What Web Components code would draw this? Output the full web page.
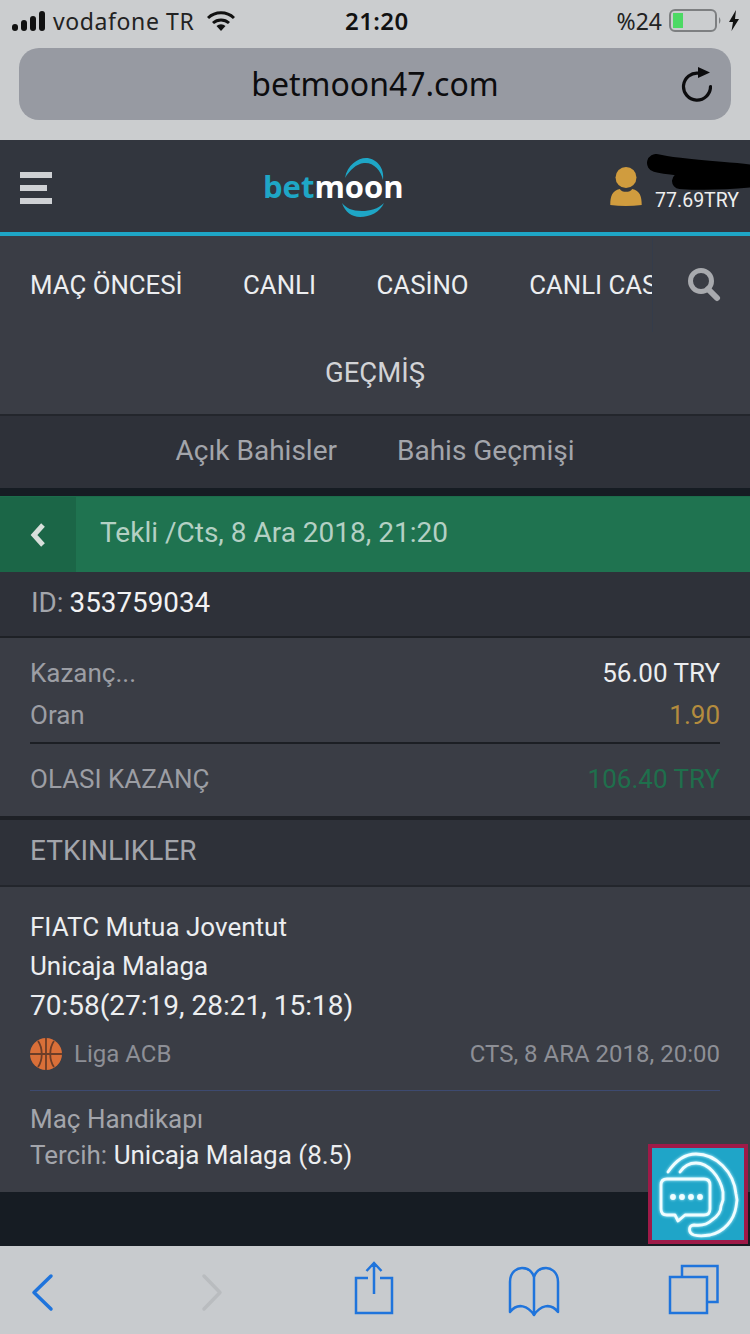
<!DOCTYPE html>
<html lang="tr">
<head>
<meta charset="utf-8">
<title>betmoon47.com</title>
<style>
  html, body { margin: 0; padding: 0; }
  body { width: 750px; height: 1334px; overflow: hidden; background: #161c23; font-family: Roboto, "Liberation Sans", sans-serif; display: flex; flex-direction: column; position: relative; }
</style>
</head>
<body>
  <ios-status></ios-status>
  <url-bar>betmoon47.com</url-bar>
  <site-header></site-header>
  <main-nav></main-nav>
  <page-title>GEÇMİŞ</page-title>
  <sub-tabs></sub-tabs>
  <back-bar>Tekli /Cts, 8 Ara 2018, 21:20</back-bar>
  <id-row></id-row>
  <stake-box></stake-box>
  <events-head>ETKINLIKLER</events-head>
  <event-card></event-card>
  <page-fill></page-fill>
  <safari-bar></safari-bar>
  <chat-button></chat-button>

<script>
// barra de status do iphone
class IosStatus extends HTMLElement {
  constructor() {
    super();
    const shadow = this.attachShadow({ mode: "open" });
    shadow.innerHTML = `
      <style>
        :host { display: flex; height: 48px; background: #cbcdcf; align-items: center; padding: 0 10px 7px 12px; box-sizing: border-box; color: #111; font-family: "Noto Sans", Roboto, sans-serif; font-size: 23px; position: relative; }
        .left { display: flex; align-items: center; flex: 1; }
        .carrier { margin-left: 8px; letter-spacing: .6px; color: #222; }
        .wifi { margin-left: 13px; }
        .time { position: absolute; left: 345px; top: 4px; font-weight: 600; font-size: 24px; letter-spacing: .4px; }
        .right { display: flex; align-items: center; }
        .pct { font-size: 23px; color: #222; margin-right: 7px; }
        .bat { margin-right: 5px; }
      </style>
      <div class="left">
        <svg width="33" height="20" viewBox="0 0 33 20"><rect x="0" y="13" width="6" height="7" rx="3" fill="#111"/><rect x="9" y="9" width="6" height="11" rx="3" fill="#111"/><rect x="18" y="5" width="6" height="15" rx="3" fill="#111"/><rect x="27" y="0" width="6" height="20" rx="3" fill="#111"/></svg>
        <span class="carrier">vodafone TR</span>
        <svg class="wifi" width="28" height="20" viewBox="0 0 28 20"><path d="M1 7 A19 19 0 0 1 27 7" fill="none" stroke="#111" stroke-width="3"/><path d="M6 12 A12 12 0 0 1 22 12" fill="none" stroke="#111" stroke-width="3"/><path d="M9.500 15 A6.500 6.500 0 0 1 18.500 15 L14 20 Z" fill="#111"/></svg>
      </div>
      <span class="time">21:20</span>
      <div class="right">
        <span class="pct">%24</span>
        <svg class="bat" width="54" height="24" viewBox="0 0 54 24"><rect x="1" y="1" width="46" height="21" rx="5" fill="none" stroke="#7d7f81" stroke-width="2"/><rect x="4" y="4" width="10" height="15" fill="#4cd964"/><path d="M50 8 q3 3.500 0 7 z" fill="#7d7f81"/></svg>
        <svg width="12" height="22" viewBox="0 0 12 22"><path d="M8 0 L1 12 H5 L3.500 21 L11 9 H7 Z" fill="#111"/></svg>
      </div>
    `;
  }
}
customElements.define("ios-status", IosStatus);

// barra de endereco do safari
class UrlBar extends HTMLElement {
  constructor() {
    super();
    const shadow = this.attachShadow({ mode: "open" });
    shadow.innerHTML = `
      <style>
        :host { display: block; height: 92px; background: #cbcdcf; padding: 0 19px; box-sizing: border-box; }
        .pill { height: 72px; box-sizing: border-box; padding-bottom: 2px; background: #979aa2; border-radius: 20px; display: flex; align-items: center; justify-content: center; position: relative; color: #0c0c0e; font-family: "Noto Sans", sans-serif; font-size: 32px; }
        svg { position: absolute; right: 19px; top: 18px; }
      </style>
      <div class="pill"><slot></slot>
        <svg width="31" height="36" viewBox="0 0 31 36"><path d="M18 7.200 A13.500 13.500 0 1 0 29.500 20.500" fill="none" stroke="#0c0c0e" stroke-width="3.200" stroke-linecap="round"/><path d="M17 1 L29 6.500 L17 12 Z" fill="#0c0c0e"/></svg>
      </div>
    `;
  }
}
customElements.define("url-bar", UrlBar);

// topo do site com logo e usuario
class SiteHeader extends HTMLElement {
  constructor() {
    super();
    const shadow = this.attachShadow({ mode: "open" });
    shadow.innerHTML = `
      <style>
        :host { display: flex; height: 96px; box-sizing: border-box; background: #32363e; border-bottom: 4px solid #1ea6c6; align-items: center; padding: 0 11px 0 20px; position: relative; color: #fff; }
        .burger { width: 32px; height: 32px; display: flex; flex-direction: column; justify-content: space-between; margin-top: 4px; }
        .burger i { display: block; height: 6px; background: #cfd1d4; }
        .burger i:nth-child(2) { width: 27px; }
        .logo { margin-left: 213px; display: flex; position: relative; margin-top: -2px; padding-top: 2px; box-sizing: border-box; width: 140px; height: 64px; align-items: center; font-family: "Open Sans", sans-serif; font-size: 31px; font-weight: 700; }
        .logo svg { position: absolute; left: 0; top: 0; overflow: visible; }
        .logo b { font-weight: 700; position: relative; color: #1ea6c6; margin-left: -2px; }
        .logo em { font-style: normal; color: #fff; position: relative; }
        .user { margin-left: auto; display: flex; align-items: flex-end; margin-top: 2px; }
        .user svg { display: block; }
        .money { font-size: 19.500px; margin-left: 13px; color: #eee; margin-bottom: -3px; line-height: 18px; position: relative; z-index: 1; }
        .scribble { position: absolute; left: 646px; top: 14px; }
      </style>
      <div class="burger"><i></i><i></i><i></i></div>
      <div class="logo">
        <svg width="140" height="66" viewBox="0 0 140 66"><path d="M80 25 C82 12 93 5 101 5 C111 5 120 15 118 27 C116 17 108 9 99 10 C91 11 85 17 80 25 Z M77 50 C80 59 87 64 95 64 C105 64 115 59 119 50 C113 56 105 58 97 58 C87 58 81 55 77 50 Z" fill="#1ea6c6"/></svg>
        <b>bet</b><em>moon</em>
      </div>
      <div class="user">
        <svg width="32" height="40" viewBox="0 0 33 42"><circle cx="16.500" cy="11" r="11" fill="#d09c3e"/><path d="M0 40 C0 30 2 25 10 23 C12 27 21 27 23 23 C31 25 33 30 33 40 Q16 42 0 40 Z" fill="#d09c3e"/></svg>
        <span class="money">77.69TRY</span>
      </div>
      <svg class="scribble" width="104" height="44" viewBox="0 0 104 44" fill="none" stroke="#000" stroke-linecap="round"><path d="M10 9 C30 14 70 16 110 20" stroke-width="18"/><path d="M34 27 C60 29 80 28 110 25" stroke-width="16"/></svg>
    `;
  }
}
customElements.define("site-header", SiteHeader);

// menu principal, o ultimo item fica cortado
class MainNav extends HTMLElement {
  constructor() {
    super();
    const shadow = this.attachShadow({ mode: "open" });
    shadow.innerHTML = `
      <style>
        :host { display: flex; height: 96px; background: #3a3d45; color: #eceef0; font-size: 25.800px; align-items: center; padding-top: 2px; box-sizing: border-box; }
        .items { width: 653px; box-sizing: border-box; border-right: 1px solid #343c4a; height: 100%; overflow: hidden; display: flex; align-items: center; gap: 60.500px; padding-left: 30px; white-space: nowrap; }
        .search { flex: 1; display: flex; justify-content: center; padding-left: 4px; }
      </style>
      <div class="items"><span>MAÇ ÖNCESİ</span><span>CANLI</span><span>CASİNO</span><span>CANLI CASİNO</span></div>
      <div class="search"><svg width="34" height="34" viewBox="0 0 34 34"><circle cx="14" cy="13" r="10.500" fill="none" stroke="#a8aaae" stroke-width="5"/><path d="M21 21 L30 30" stroke="#a8aaae" stroke-width="6" stroke-linecap="round"/></svg></div>
    `;
  }
}
customElements.define("main-nav", MainNav);

class PageTitle extends HTMLElement {
  constructor() {
    super();
    const shadow = this.attachShadow({ mode: "open" });
    shadow.innerHTML = `
      <style>
        :host { display: flex; height: 84px; background: #3a3d45; color: #d2d3d6; font-size: 27.500px; align-items: center; justify-content: center; border-bottom: 2px solid #23262c; box-sizing: border-box; padding-bottom: 2px; }
      </style>
      <slot></slot>
    `;
  }
}
customElements.define("page-title", PageTitle);

class SubTabs extends HTMLElement {
  constructor() {
    super();
    const shadow = this.attachShadow({ mode: "open" });
    shadow.innerHTML = `
      <style>
        :host { display: flex; height: 72px; box-sizing: border-box; padding-bottom: 4px; background: #2e3139; color: #a3a5ab; font-size: 28px; align-items: center; justify-content: center; gap: 60px; }
      </style>
      <span>Açık Bahisler</span><span>Bahis Geçmişi</span>
    `;
  }
}
customElements.define("sub-tabs", SubTabs);

// faixa verde com botao de voltar
class BackBar extends HTMLElement {
  constructor() {
    super();
    const shadow = this.attachShadow({ mode: "open" });
    shadow.innerHTML = `
      <style>
        :host { display: flex; height: 76px; margin-top: 8px; background: #1f7350; color: #b4d0c4; font-size: 28px; align-items: center; border-top: 1px solid #1c6c4b; box-sizing: border-box; }
        .back { width: 76px; height: 100%; background: #1b6647; display: flex; align-items: center; justify-content: center; margin-right: 24px; }
        span { padding-bottom: 4px; }
      </style>
      <div class="back"><svg width="18" height="26" viewBox="0 0 18 26"><path d="M14 3 L5 13 L14 23" fill="none" stroke="#d8dfdb" stroke-width="5"/></svg></div>
      <span><slot></slot></span>
    `;
  }
}
customElements.define("back-bar", BackBar);

class IdRow extends HTMLElement {
  constructor() {
    super();
    const shadow = this.attachShadow({ mode: "open" });
    shadow.innerHTML = `
      <style>
        :host { display: flex; height: 66px; background: #2e3139; border-bottom: 2px solid #1e2126; box-sizing: border-box; align-items: center; padding: 0 31px 4px; font-size: 27.800px; color: #a3a5ab; }
        span { color: #f2f2f3; margin-left: 6px; }
      </style>
      ID: <span>353759034</span>
    `;
  }
}
customElements.define("id-row", IdRow);

// caixa com valores da aposta
class StakeBox extends HTMLElement {
  constructor() {
    super();
    const shadow = this.attachShadow({ mode: "open" });
    shadow.innerHTML = `
      <style>
        :host { display: block; height: 182px; background: #3a3d45; padding: 14px 30px 0 30px; box-sizing: border-box; border-bottom: 4px solid #1e2126; font-size: 26px; color: #9c9ea4; }
        .row { display: flex; justify-content: space-between; align-items: center; height: 42px; }
        .white { color: #eceef0; }
        .gold { color: #b48c3e; }
        .green { color: #1f6f4c; }
        hr { border: 0; border-top: 2px solid #1c1f24; margin: 6px 0 0; }
        .total { height: 70px; }
      </style>
      <div class="row"><span>Kazanç...</span><span class="white">56.00 TRY</span></div>
      <div class="row"><span>Oran</span><span class="gold">1.90</span></div>
      <hr>
      <div class="row total"><span>OLASI KAZANÇ</span><span class="green">106.40 TRY</span></div>
    `;
  }
}
customElements.define("stake-box", StakeBox);

class EventsHead extends HTMLElement {
  constructor() {
    super();
    const shadow = this.attachShadow({ mode: "open" });
    shadow.innerHTML = `
      <style>
        :host { display: flex; height: 67px; background: #2e3139; border-bottom: 2px solid #23262c; box-sizing: border-box; align-items: center; padding: 0 30px 4px; font-size: 28px; color: #a3a5ab; }
      </style>
      <slot></slot>
    `;
  }
}
customElements.define("events-head", EventsHead);

// cartao do jogo
class EventCard extends HTMLElement {
  constructor() {
    super();
    const shadow = this.attachShadow({ mode: "open" });
    shadow.innerHTML = `
      <style>
        :host { display: block; height: 305px; background: #3a3d45; padding: 21px 30px 0; box-sizing: border-box; font-size: 26px; color: #eceef0; }
        .team { height: 39px; line-height: 39px; }
        .score { font-size: 28px; }
        .meta { display: flex; align-items: center; height: 57px; color: #8d8f96; font-size: 24px; }
        .meta svg { margin-right: 12px; }
        .date { margin-left: auto; }
        hr { border: 0; border-top: 1px solid #3d4a70; margin: 8px 0 0; }
        .market { color: #a3a5ab; margin-top: 10px; line-height: 36px; height: 36px; }
        .market span { color: #eceef0; }
        .choice { margin-top: 0; }
      </style>
      <div class="team">FIATC Mutua Joventut</div>
      <div class="team">Unicaja Malaga</div>
      <div class="team score">70:58(27:19, 28:21, 15:18)</div>
      <div class="meta">
        <svg width="32" height="32" viewBox="0 0 32 32"><circle cx="16" cy="16" r="16" fill="#d96f38"/><path d="M16 0 V32 M0 16 H32 M8 3 C13 10 13 22 8 29 M24 3 C19 10 19 22 24 29" fill="none" stroke="#6b3d28" stroke-width="1.800"/></svg>
        <span>Liga ACB</span><span class="date">CTS, 8 ARA 2018, 20:00</span>
      </div>
      <hr>
      <div class="market">Maç Handikapı</div>
      <div class="market choice">Tercih: <span>Unicaja Malaga (8.5)</span></div>
    `;
  }
}
customElements.define("event-card", EventCard);

class PageFill extends HTMLElement {
  constructor() {
    super();
    const shadow = this.attachShadow({ mode: "open" });
    shadow.innerHTML = `<style>:host { display: block; flex: 1; background: #161c23; }</style>`;
  }
}
customElements.define("page-fill", PageFill);

// barra inferior do safari
class SafariBar extends HTMLElement {
  constructor() {
    super();
    const shadow = this.attachShadow({ mode: "open" });
    shadow.innerHTML = `
      <style>
        :host { display: block; height: 88px; background: #c8cbce; }
        svg { display: block; }
      </style>
      <svg width="750" height="88" viewBox="0 0 750 88" fill="none" stroke="#1f74dc" stroke-width="2.500">
        <path d="M51 30 L34 46.500 L51 63" stroke-width="3.500" stroke-linecap="round" stroke-linejoin="round"/>
        <path d="M204 30 L220 46.500 L204 63" stroke="#b9bcbf" stroke-width="3.500" stroke-linecap="round" stroke-linejoin="round"/>
        <path d="M368 32 H356 V67 H392 V32 H380 M374 17 V48 M366.500 25 L374 17 L381.500 25"/>
        <path d="M534 69 C528 60 518 56 510 66 V36 C510 25 518 22 522 22 C528 22 532 25 534 31 C536 25 540 22 546 22 C550 22 558 25 558 36 V66 C550 56 540 60 534 69 Z M534 31 V69" stroke-linejoin="round"/>
        <path d="M670 31 H707 V67 H670 Z M682 30 V20 H717.500 V56 H707"/>
      </svg>
    `;
  }
}
customElements.define("safari-bar", SafariBar);

// botao flutuante do chat
class ChatButton extends HTMLElement {
  constructor() {
    super();
    const shadow = this.attachShadow({ mode: "open" });
    shadow.innerHTML = `
      <style>
        :host { position: absolute; left: 648px; top: 1144px; width: 100px; height: 100px; box-sizing: border-box; border: 4px solid #9e1a48; background: #1fa5c8; display: block; }
        svg { display: block; filter: drop-shadow(0 0 1.500px #bff3ff); }
      </style>
      <svg width="92" height="92" viewBox="0 0 92 92" fill="none" stroke="#f0fdff" stroke-width="2.800" stroke-linecap="round" stroke-linejoin="round">
        <path d="M16 24 C24 12 34 6 44 6 C64 6 82 24 84 46 L85 52 L84 59 C82 72 72 84 58 87 C52 88 46 88 42 87 C36 85 36 77 42 77 C50 78 56 76 60 72 C66 68 69 64 69 58 L71 52 L71 44 C68 28 56 15 44 15 C38 15 32 18 28 24"/>
        <path d="M15 31 H52 Q58 31 58 37 V61 Q58 67 52 67 H33 L26 73 L23 67 H15 Q9 67 9 61 V37 Q9 31 15 31 Z"/>
        <circle cx="21" cy="49" r="1.500" fill="#f0fdff"/><circle cx="30" cy="49" r="1.500" fill="#f0fdff"/><circle cx="39" cy="49" r="1.500" fill="#f0fdff"/><circle cx="48" cy="49" r="1.500" fill="#f0fdff"/>
      </svg>
    `;
  }
}
customElements.define("chat-button", ChatButton);
</script>
</body>
</html>
